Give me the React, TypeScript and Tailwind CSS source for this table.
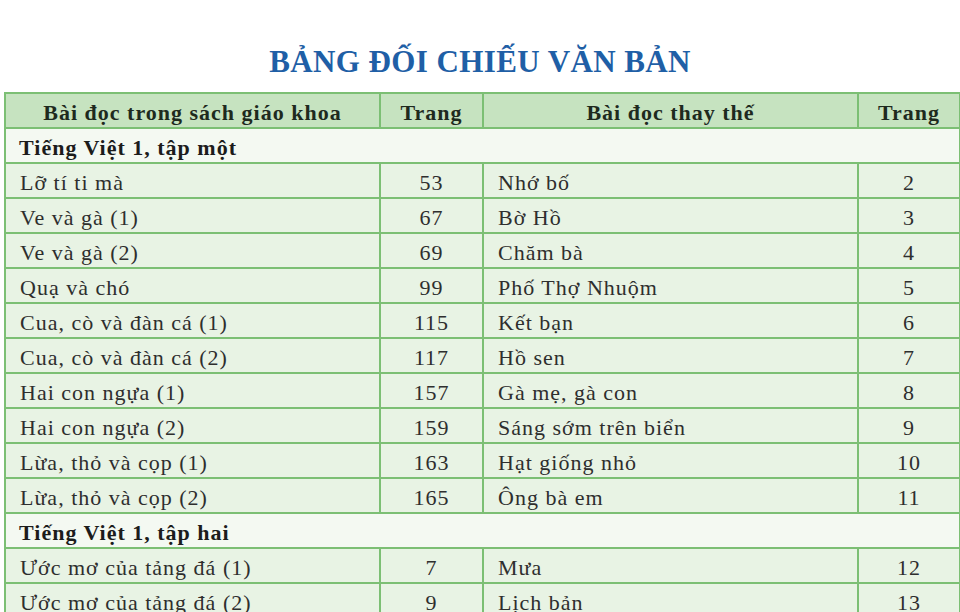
import React from 'react';

type Row =
  | { section: string }
  | { a: string; p1: number; b: string; p2: number };

const rows: Row[] = [
  { section: 'Tiếng Việt 1, tập một' },
  { a: 'Lỡ tí ti mà', p1: 53, b: 'Nhớ bố', p2: 2 },
  { a: 'Ve và gà (1)', p1: 67, b: 'Bờ Hồ', p2: 3 },
  { a: 'Ve và gà (2)', p1: 69, b: 'Chăm bà', p2: 4 },
  { a: 'Quạ và chó', p1: 99, b: 'Phố Thợ Nhuộm', p2: 5 },
  { a: 'Cua, cò và đàn cá (1)', p1: 115, b: 'Kết bạn', p2: 6 },
  { a: 'Cua, cò và đàn cá (2)', p1: 117, b: 'Hồ sen', p2: 7 },
  { a: 'Hai con ngựa (1)', p1: 157, b: 'Gà mẹ, gà con', p2: 8 },
  { a: 'Hai con ngựa (2)', p1: 159, b: 'Sáng sớm trên biển', p2: 9 },
  { a: 'Lừa, thỏ và cọp (1)', p1: 163, b: 'Hạt giống nhỏ', p2: 10 },
  { a: 'Lừa, thỏ và cọp (2)', p1: 165, b: 'Ông bà em', p2: 11 },
  { section: 'Tiếng Việt 1, tập hai' },
  { a: 'Ước mơ của tảng đá (1)', p1: 7, b: 'Mưa', p2: 12 },
  { a: 'Ước mơ của tảng đá (2)', p1: 9, b: 'Lịch bản', p2: 13 },
];

const cell = 'border-2 border-[#7cbf74] h-[35px] p-0';

// nudge text down a little inside the cell, like the printed table
const T = ({ children }: { children: React.ReactNode }) => (
  <span className="inline-block translate-y-[2px]">{children}</span>
);

export default function App() {
  return (
    <div className="w-[960px] h-[612px] overflow-hidden bg-white font-[Liberation_Serif,serif]">
      <h1 className="pt-[42px] h-[92px] text-center text-[31px] leading-[40px] font-bold tracking-[0.4px] text-[#1f5fa6]">
        BẢNG ĐỐI CHIẾU VĂN BẢN
      </h1>
      <table className="ml-[4px] border-collapse table-fixed w-[955px] text-[22px] tracking-[1px] text-[#2e2e2e]">
        <colgroup>
          <col className="w-[375px]" />
          <col className="w-[103px]" />
          <col className="w-[375px]" />
          <col className="w-[102px]" />
        </colgroup>
        <thead>
          <tr className="bg-[#c6e3c0] text-[#1e2a1e] font-bold">
            <th className={cell}><T>Bài đọc trong sách giáo khoa</T></th>
            <th className={cell}><T>Trang</T></th>
            <th className={cell}><T>Bài đọc thay thế</T></th>
            <th className={cell}><T>Trang</T></th>
          </tr>
        </thead>
        <tbody>
          {rows.map((r, i) =>
            'section' in r ? (
              <tr key={i} className="bg-[#f4f9f2]">
                <td colSpan={4} className={`${cell} pl-[13px] font-bold text-[#1c1c1c]`}>
                  <T>{r.section}</T>
                </td>
              </tr>
            ) : (
              <tr key={i} className="bg-[#e8f3e4]">
                <td className={`${cell} pl-[14px]`}><T>{r.a}</T></td>
                <td className={`${cell} text-center`}><T>{r.p1}</T></td>
                <td className={`${cell} pl-[14px]`}><T>{r.b}</T></td>
                <td className={`${cell} text-center`}><T>{r.p2}</T></td>
              </tr>
            )
          )}
        </tbody>
      </table>
    </div>
  );
}
